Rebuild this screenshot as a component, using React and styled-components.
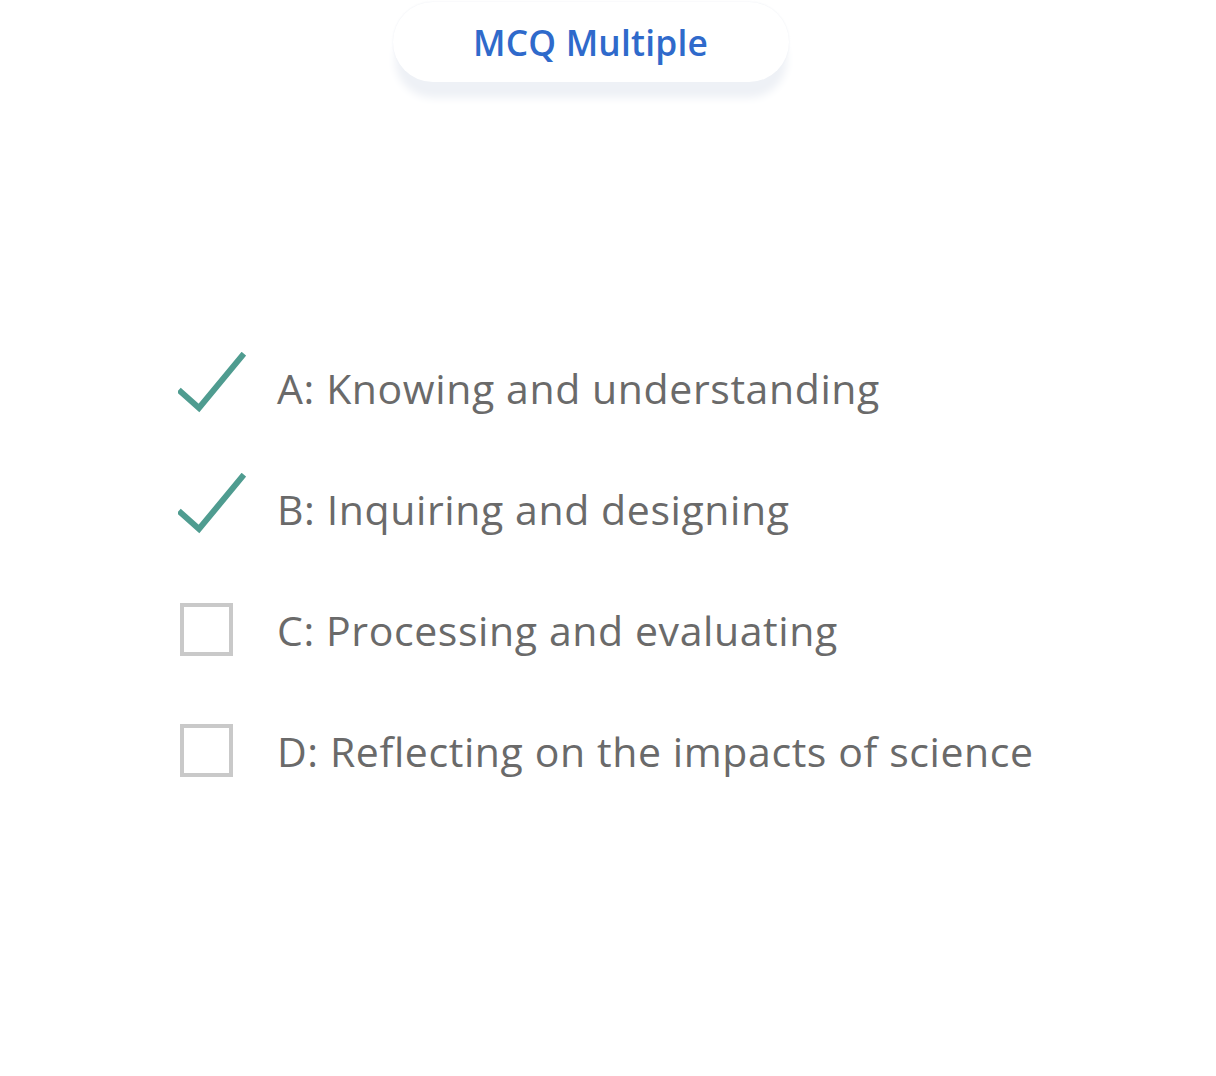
import React from "react";
import styled, { createGlobalStyle } from "styled-components";

const Global = createGlobalStyle`
  html, body { margin: 0; padding: 0; background: #fff; }
  body { font-family: "Open Sans", sans-serif; }
`;

const Page = styled.div`
  width: 1216px;
  height: 1076px;
  display: flex;
  flex-direction: column;
  align-items: flex-start;
`;

const PillWrap = styled.div`
  width: 100%;
  display: flex;
  justify-content: center;
  padding-top: 2px;
`;

const Pill = styled.div`
  margin-left: -35px;
  width: 396px;
  height: 80px;
  border-radius: 40px;
  background: #fff;
  box-shadow: 0 18px 8px -2px #eef1f6, 0 0 2px rgba(220, 225, 235, 0.6);
  display: flex;
  align-items: center;
  justify-content: center;
  font-family: "Open Sans", sans-serif;
  font-weight: 600;
  font-size: 35.3px;
  color: #2f6acb;
  letter-spacing: 0.2px;
`;

const List = styled.div`
  margin-top: 278px;
  margin-left: 178px;
  display: flex;
  flex-direction: column;
  gap: 66px;
`;

const Row = styled.div`
  display: flex;
  align-items: center;
  height: 55px;
`;

const Mark = styled.div`
  width: 68px;
  height: 55px;
  display: flex;
  align-items: center;
  justify-content: flex-start;
  margin-right: 31px;
`;

const Box = styled.div`
  margin-left: 2px;
  width: 45px;
  height: 45px;
  border: 4px solid #c9c9c9;
`;

const Label = styled.span`
  font-family: "Open Sans", sans-serif;
  font-size: 41px;
  color: #6a6a6a;
  white-space: nowrap;
  letter-spacing: 0.6px;
`;

const Check = () => (
  <svg width="68" height="62" viewBox="0 0 68 62" style={{ marginTop: -10 }}>
    <path d="M3 40 L21 56 L64 4" fill="none" stroke="#4f9c90" strokeWidth="6" strokeLinecap="square" strokeLinejoin="miter" />
  </svg>
);

const options = [
  { text: "A: Knowing and understanding", checked: true },
  { text: "B: Inquiring and designing", checked: true },
  { text: "C: Processing and evaluating", checked: false },
  { text: "D: Reflecting on the impacts of science", checked: false },
];

export default function App() {
  return (
    <Page>
      <Global />
      <PillWrap>
        <Pill>MCQ Multiple</Pill>
      </PillWrap>
      <List>
        {options.map((o) => (
          <Row key={o.text}>
            <Mark>{o.checked ? <Check /> : <Box />}</Mark>
            <Label>{o.text}</Label>
          </Row>
        ))}
      </List>
    </Page>
  );
}
